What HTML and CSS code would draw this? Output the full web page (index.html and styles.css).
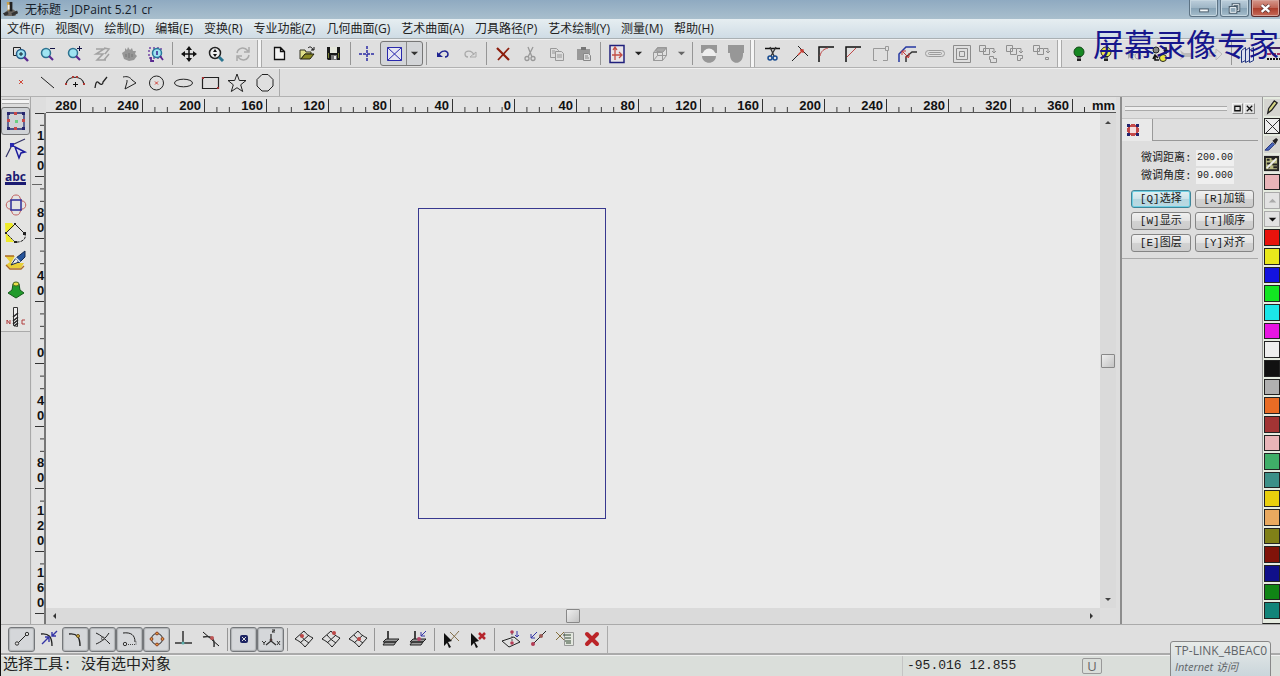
FILE: index.html
```html
<!DOCTYPE html>
<html lang="zh-CN">
<head>
<meta charset="utf-8">
<title>无标题 - JDPaint 5.21 cr</title>
<link rel="stylesheet" href="styles.css">
</head>
<body>
<div class="app">
  <header class="titlebar">
    <svg class="logo" viewBox="0 0 18 18"><path d="M3 12l4-3 5 0 4 3-2 4H4z" fill="#6b6660"/><path d="M5 1h4l1 9H6z" fill="#c9a04a"/><path d="M8 1h3l0 10H8z" fill="#222"/><path d="M1 13l5-2 1 3-4 2zM10 13l6-3 1 3-6 3z" fill="#333"/><path d="M6 4h2v5H6z" fill="#eee"/></svg>
    <h1 class="caption">无标题 - JDPaint 5.21 cr</h1>
    <div class="winbtns">
      <button class="winbtn" aria-label="最小化"><svg viewBox="0 0 28 15"><rect x="10" y="8" width="9" height="3" fill="#f4f8fa" stroke="#4c5e6c"/></svg></button>
      <button class="winbtn" aria-label="还原"><svg viewBox="0 0 28 15"><path d="M12.500 3.500h6v6h-6z" fill="none" stroke="#4c5e6c" stroke-width="3"/><path d="M12.500 3.500h6v6h-6z" fill="none" stroke="#eef4f7"/><path d="M9.500 6.500h6v5h-6z" fill="#8fa8b8" stroke="#4c5e6c" stroke-width="3"/><path d="M9.500 6.500h6v5h-6z" fill="#8fa8b8" stroke="#eef4f7"/></svg></button>
      <button class="winbtn close" aria-label="关闭"><svg viewBox="0 0 28 15"><path d="M10 4l8 7M18 4l-8 7" stroke="#5a3838" stroke-width="4"/><path d="M10 4l8 7M18 4l-8 7" stroke="#fff" stroke-width="2.400"/></svg></button>
    </div>
  </header>

  <nav class="menubar">
    <button>文件(F)</button><button>视图(V)</button><button>绘制(D)</button><button>编辑(E)</button><button>变换(R)</button><button>专业功能(Z)</button><button>几何曲面(G)</button><button>艺术曲面(A)</button><button>刀具路径(P)</button><button>艺术绘制(Y)</button><button>测量(M)</button><button>帮助(H)</button>
  </nav>

  <div class="toolbar">
    <button class="tool" aria-label="窗口缩放"><svg viewBox="0 0 20 20"><path d="M2.500 3.500h7v8h-7z" fill="none" stroke="#222"/><circle cx="10" cy="10" r="4.500" fill="#9fe4f2" stroke="#245c8a" stroke-width="1.500"/><path d="M10 8v4M8 10h4" stroke="#123"/><path d="M13 13l4 4" stroke="#5a2a90" stroke-width="2.400"/></svg></button>
    <button class="tool" aria-label="缩小"><svg viewBox="0 0 20 20"><circle cx="8" cy="9" r="4.500" fill="#9fe4f2" stroke="#2d7290" stroke-width="1.500"/><path d="M11 12l4 4" stroke="#5a2a90" stroke-width="2.200"/><path d="M12 4.500h5" stroke="#114"/></svg></button>
    <button class="tool" aria-label="放大"><svg viewBox="0 0 20 20"><circle cx="8" cy="9" r="4.500" fill="#9fe4f2" stroke="#2d7290" stroke-width="1.500"/><path d="M11 12l4 4" stroke="#5a2a90" stroke-width="2.200"/><path d="M12 4.500h5M14.500 2v5" stroke="#114"/></svg></button>
    <button class="tool" aria-label="上一视图"><svg viewBox="0 0 20 20" fill="none" stroke="#a2a2a2" stroke-width="1.500"><path d="M4 5h8l-8 5h7l-6 6h9M12 4l5 1-4 5M12 16l5-6"/></svg></button>
    <button class="tool" aria-label="平移"><svg viewBox="0 0 20 20"><path d="M3 9l3-2 0-3 2 2 1-3 2 3 2-2 1 3 3 0-1 3 2 2-3 4-5 1-5-2z" fill="#979797"/><path d="M7 10v3M10 9v5M13 10v3" stroke="#777"/></svg></button>
    <button class="tool" aria-label="全部显示"><svg viewBox="0 0 20 20"><path d="M3 4h12v10H3z" fill="none" stroke="#7347a5" stroke-dasharray="2 2" stroke-width="1.500"/><circle cx="11" cy="9" r="4.500" fill="#9fe4f2" stroke="#26789b" stroke-width="1.500"/><path d="M11 7v4" stroke="#39228a" stroke-width="1.500"/><path d="M14 12l3 4M5 13v4h3" fill="none" stroke="#5a2a90" stroke-width="1.800"/></svg></button>
    <i class="sep"></i>
    <button class="tool" aria-label="移动视图"><svg viewBox="0 0 20 20"><path d="M10 4v12M4 10h12" stroke="#111" stroke-width="1.500"/><path d="M10 2l3 4H7zM10 18l3-4H7zM2 10l4-3v6zM18 10l-4-3v6z" fill="#111"/></svg></button>
    <button class="tool" aria-label="动态缩放"><svg viewBox="0 0 20 20"><circle cx="9" cy="9" r="5.500" fill="#eee" stroke="#222" stroke-width="1.500"/><path d="M9 5l2 3H7zM9 13l2-3H7z" fill="#111"/><path d="M13 13l4 4" stroke="#2b7590" stroke-width="3"/></svg></button>
    <button class="tool" aria-label="刷新"><svg viewBox="0 0 20 20" fill="none" stroke="#aaa" stroke-width="1.500"><path d="M4 9c1-5 7-7 11-2M16 3v5h-5M16 11c-1 5-7 7-11 2M4 17v-5h5"/></svg></button>
    <i class="grip"></i>
    <button class="tool" aria-label="新建"><svg viewBox="0 0 20 20"><path d="M4.500 3.500h6l4 4v8h-10zM10.500 3.500v4h4" fill="#f4f4f4" stroke="#111" stroke-width="1.300"/></svg></button>
    <button class="tool" aria-label="打开"><svg viewBox="0 0 20 20"><path d="M3 6h5l1 2h5v2H8l-4 5H3z" fill="#dfe08a" stroke="#332"/><path d="M4 15l4-5h9l-4 5z" fill="#8b8b25" stroke="#221"/><path d="M11 4c2-2 4-1 5 2M17 3v3h-3" fill="none" stroke="#111"/></svg></button>
    <button class="tool" aria-label="保存"><svg viewBox="0 0 20 20"><path d="M3 3h13v13H4l-1-1z" fill="#191919"/><path d="M6 3h7v6H6z" fill="#e6e8dc"/><path d="M4 9h1v5H4zM14 9h1v5h-1z" fill="#788033"/><path d="M7 11h6v5H7z" fill="#777"/><path d="M10 12h2v3h-2z" fill="#eee"/></svg></button>
    <i class="sep"></i>
    <button class="tool" aria-label="十字光标"><svg viewBox="0 0 20 20"><path d="M2 10h16M10 2v16" stroke="#2b2ba5" stroke-width="1.500" stroke-dasharray="3 1"/></svg></button>
    <span class="split">
      <button class="split-main" aria-label="显示方式"><svg viewBox="0 0 20 20"><path d="M3.500 3.500h14v13h-14zM3.500 3.500l14 13M17.500 3.500l-14 13" fill="#e5e6f2" stroke="#2929ad"/></svg></button>
      <button class="split-drop" aria-label="更多"><svg viewBox="0 0 10 10"><path d="M1 3h8l-4 4z" fill="#333"/></svg></button>
    </span>
    <i class="sep"></i>
    <button class="tool" aria-label="撤销"><svg viewBox="0 0 20 20"><path d="M6 11c2-5 9-5 9-1 0 2-1 3-3 3" fill="none" stroke="#1d2290" stroke-width="1.500"/><path d="M4 8v5h6z" fill="#1d2290"/></svg></button>
    <button class="tool" aria-label="重做"><svg viewBox="0 0 20 20"><path d="M14 11c-2-5-9-5-9-1 0 2 1 3 3 3" fill="none" stroke="#aaa" stroke-width="1.300"/><path d="M16 8v5h-6z" fill="none" stroke="#aaa"/></svg></button>
    <i class="sep"></i>
    <button class="tool" aria-label="删除"><svg viewBox="0 0 20 20"><path d="M4 4l12 12" stroke="#8d1d0c" stroke-width="2.200"/><path d="M16 4L5 16" stroke="#8d1d0c" stroke-width="1.800"/></svg></button>
    <button class="tool" aria-label="剪切"><svg viewBox="0 0 20 20" fill="none" stroke="#999" stroke-width="1.300"><path d="M8 3l4 10M13 3L8 13"/><circle cx="7" cy="14.500" r="2"/><circle cx="13" cy="14.500" r="2"/></svg></button>
    <button class="tool" aria-label="复制"><svg viewBox="0 0 20 20" fill="#ddd" stroke="#999"><path d="M3.500 4.500h6l2 2v7h-8z"/><path d="M8.500 7.500h6l2 2v7h-8z"/><path d="M5 7h3M5 9h3M10 11h5M10 13h5"/></svg></button>
    <button class="tool" aria-label="粘贴"><svg viewBox="0 0 20 20"><path d="M3 5h13v11H3z" fill="#999"/><path d="M7 3h5v3H7z" fill="#777"/><path d="M9.500 9.500h5l2 2v5h-7z" fill="#ddd" stroke="#888"/><path d="M11 12h3M11 14h4" stroke="#888"/></svg></button>
    <i class="sep"></i>
    <button class="tool" aria-label="坐标系"><svg viewBox="0 0 20 20"><path d="M3 1.500h14v17H3z" fill="#e9e4e8" stroke="#20207c" stroke-width="1.500"/><path d="M8 16V4M5 11h10M12 8l3 3-3 3M6 6l2-3 2 3" fill="none" stroke="#c34e45" stroke-width="1.300"/></svg></button>
    <button class="drop" aria-label="坐标系选项"><svg viewBox="0 0 10 10"><path d="M1 3h8l-4 4z" fill="#222"/></svg></button>
    <button class="tool" aria-label="立体视图"><svg viewBox="0 0 20 20" fill="none" stroke="#999"><path d="M3.500 8.500h9v8h-9zM3.500 8.500l4-5h9l-4 5M16.500 3.500v8l-4 5M7.500 3.500v8h9M7.500 11.500l-4 5"/><path d="M5 7l3-3h8l-3 4z" fill="#aaa"/></svg></button>
    <button class="drop" aria-label="视图选项"><svg viewBox="0 0 10 10"><path d="M1 3h8l-4 4z" fill="#666"/></svg></button>
    <i class="sep"></i>
    <button class="tool" aria-label="着色"><svg viewBox="0 0 20 20"><path d="M2 1h16v8H2z" fill="#979797"/><circle cx="10" cy="11" r="6.500" fill="#eee"/><path d="M3 12h14c0 9-14 9-14 0z" fill="#979797"/></svg></button>
    <button class="tool" aria-label="实体"><svg viewBox="0 0 20 20"><path d="M2 1h16v8h-1c1 13-14 13-13 0H2z" fill="#979797"/></svg></button>
    <i class="grip"></i>
    <button class="tool" aria-label="修剪"><svg viewBox="0 0 20 20"><path d="M2 4.500h15" stroke="#111" stroke-width="1.500"/><path d="M7 3l4 9M13 3l-5 9" stroke="#333" stroke-width="1.300"/><g fill="none" stroke="#174b91" stroke-width="1.500"><circle cx="7" cy="14" r="2"/><circle cx="12" cy="14" r="2"/></g></svg></button>
    <button class="tool" aria-label="延伸"><svg viewBox="0 0 20 20"><path d="M8 2l10 10M2 17l6-6" stroke="#222"/><path d="M8 11l5-5M13 9V6h-3" fill="none" stroke="#c8392e" stroke-width="1.300"/></svg></button>
    <button class="tool" aria-label="倒圆"><svg viewBox="0 0 20 20"><path d="M2 18V3h15" fill="none" stroke="#111" stroke-width="1.500"/><path d="M3 12c1-5 4-7 8-8" fill="none" stroke="#c04848"/></svg></button>
    <button class="tool" aria-label="倒角"><svg viewBox="0 0 20 20"><path d="M2 18V3h15" fill="none" stroke="#111" stroke-width="1.500"/><path d="M3 13l9-9" stroke="#c04848"/></svg></button>
    <button class="tool" aria-label="连接"><svg viewBox="0 0 20 20" fill="none" stroke="#999"><path d="M6 16.500H2.500v-12h12M16.500 6v10.500H12"/><path d="M14.500 2.500h3v4h-3z"/></svg></button>
    <button class="tool" aria-label="偏移"><svg viewBox="0 0 20 20" fill="none"><path d="M1 18v-8l7-7h10" stroke="#2639a2" stroke-width="1.500"/><path d="M8 18v-5l6-5h5" stroke="#333" stroke-width="1.500"/><path d="M4 7l7 7M4 11V7h4M7 13h4V9" stroke="#c53838"/></svg></button>
    <button class="tool" aria-label="腰形"><svg viewBox="0 0 20 20" fill="none" stroke="#9b9b9b"><rect x=".5" y="6.500" width="19" height="6" rx="3"/><rect x="3.500" y="8.500" width="13" height="2" rx="1"/></svg></button>
    <button class="tool" aria-label="多重偏移"><svg viewBox="0 0 20 20" fill="none" stroke="#8c8c8c"><path d="M1.500 1.500h17v17h-17zM4.500 4.500h11v11h-11zM7.500 7.500h5v5h-5z"/></svg></button>
    <button class="tool" aria-label="并集"><svg viewBox="0 0 20 20" fill="none" stroke="#8f8f8f"><path d="M.5 1.500h6v6h-6zM4.500 4.500h6v6h-6zM11 4.500h4v4M13 7l2 2 2-2M10.500 12.500h4v2h3v4h-6v-3h-1z"/></svg></button>
    <button class="tool" aria-label="交集"><svg viewBox="0 0 20 20" fill="none" stroke="#8f8f8f"><path d="M.5 1.500h6v6h-6zM4.500 4.500h6v6h-6zM11 4.500h4v4M13 7l2 2 2-2M11.500 11.500h5v3h-2v2h-3z"/></svg></button>
    <button class="tool" aria-label="差集"><svg viewBox="0 0 20 20" fill="none" stroke="#8f8f8f"><path d="M.5 1.500h6v6h-6zM4.500 4.500h6v6h-6zM11 4.500h4v4M13 7l2 2 2-2M12.500 13.500h3v2h-3z"/></svg></button>
    <i class="grip"></i>
    <button class="tool" aria-label="显示"><svg viewBox="0 0 20 20"><circle cx="9" cy="8" r="5" fill="#168722" stroke="#134a18"/><path d="M7 12h4v5H7z" fill="#222"/><path d="M7 14h4" stroke="#bbb"/></svg></button>
    <button class="tool" aria-label="点亮"><svg viewBox="0 0 20 20"><circle cx="9" cy="8" r="5" fill="#ece94b" stroke="#222"/><path d="M7 12h4v5H7z" fill="#222"/><path d="M7 14h4" stroke="#bbb"/></svg></button>
    <button class="tool" aria-label="拾取"><svg viewBox="0 0 20 20"><path d="M4 5l7 6-3 1 2 4-2 0-2-3-2 2z" fill="#aaa"/><circle cx="14" cy="12" r="3" fill="none" stroke="#aaa"/></svg></button>
    <button class="tool" aria-label="切换显示"><svg viewBox="0 0 20 20"><circle cx="5" cy="6" r="3" fill="#888" stroke="#222"/><circle cx="12" cy="14" r="3.500" fill="#e8e63f" stroke="#222"/><path d="M2 15l2-4 3 3M4 12v4h4M11 4h4v4M13 6l2 3 2-3" fill="none" stroke="#111" stroke-width="1.600"/></svg></button>
    <button class="tool" aria-label="上一个"><svg viewBox="0 0 20 20"><path d="M2 6l4 3h7l3-2-2 4 2 4-4-2H6l-4 3 2-5z" fill="#bbb"/></svg></button>
    <button class="tool" aria-label="下一个"><svg viewBox="0 0 20 20"><path d="M4 9h7V5l6 5-6 6v-4H4z" fill="none" stroke="#bbb"/></svg></button>
    <i class="sep"></i>
    <button class="tool" aria-label="图层"><svg viewBox="0 0 20 20" fill="#dce1ef" stroke="#22347f"><path d="M3.500 6.500l4-3v13l-4 2zM7.500 6.500l4-3v13l-4 2zM11.500 6.500l4-3v13l-4 2z"/></svg></button>
    <button class="tool" aria-label="线型"><svg viewBox="0 0 20 20"><path d="M2 4h18" stroke="#402060" stroke-width="2"/><path d="M2 10h18" stroke="#a03060" stroke-width="2" stroke-dasharray="4 1"/><path d="M2 15h18" stroke="#111" stroke-width="2" stroke-dasharray="2 1"/></svg></button>
  </div>

  <div class="toolbar">
    <button class="tool" aria-label="点"><svg viewBox="0 0 20 20"><path d="M8 7l4 4M12 7l-4 4" stroke="#d04a3b"/></svg></button>
    <button class="tool" aria-label="直线"><svg viewBox="0 0 20 20"><path d="M3 4l13 11" stroke="#222"/></svg></button>
    <button class="tool" aria-label="圆弧"><svg viewBox="0 0 20 20"><path d="M1 11c2-9 16-9 18 0" fill="none" stroke="#222" stroke-width="1.200"/><path d="M10.500 9v5M8 11.500h5" stroke="#111"/><path d="M0 10h2v2H0zM18 10h2v2h-2zM7 3h2v2H7zM11 3h2v2h-2z" fill="#ad3934"/></svg></button>
    <button class="tool" aria-label="样条"><svg viewBox="0 0 20 20"><path d="M3 15c1-7 2-7 4-5s4 2 4-1l4-5" fill="none" stroke="#222" stroke-width="1.300"/></svg></button>
    <button class="tool" aria-label="多段线"><svg viewBox="0 0 20 20"><path d="M4 4c4-1 7 0 9 3l4 3-11 6 2-7V7" fill="none" stroke="#222"/></svg></button>
    <button class="tool" aria-label="圆"><svg viewBox="0 0 20 20"><circle cx="10.500" cy="10" r="7" fill="none" stroke="#222"/><path d="M9 8.500l3 3M12 8.500l-3 3" stroke="#d03b33"/></svg></button>
    <button class="tool" aria-label="椭圆"><svg viewBox="0 0 20 20"><ellipse cx="10.500" cy="10" rx="9" ry="3.800" fill="none" stroke="#222"/></svg></button>
    <button class="tool" aria-label="矩形"><svg viewBox="0 0 20 20"><path d="M2.500 4.500h16v11h-16z" fill="none" stroke="#222" stroke-width="1.200"/><path d="M2 4h2v2H2zM17 14h2v2h-2z" fill="#a33232"/></svg></button>
    <button class="tool" aria-label="星形"><svg viewBox="0 0 20 20"><path d="M10 1l2.300 6.500H19l-5.300 4.300 2 6.700L10 14.700 4.300 18.500l2-6.700L1 7.500h6.700z" fill="none" stroke="#222"/></svg></button>
    <button class="tool" aria-label="多边形"><svg viewBox="0 0 20 20"><path d="M8 1.500h6l5 5v6.500l-5 5H8L3 13V6.500z" fill="none" stroke="#222"/></svg></button>
    <i class="endline"></i>
  </div>

  <main class="body">
    <aside class="rail">
      <div class="rail-grip"></div>
      <button class="rail-btn on" aria-label="选择"><svg viewBox="0 0 24 24"><path d="M4 4h16v16H4z" fill="none" stroke="#222b70" stroke-width="1.300"/><path d="M3 3h3v3H3zM18 3h3v3h-3zM3 18h3v3H3zM18 18h3v3h-3z" fill="#26266f"/><path d="M10 3h3v3h-3zM10 18h3v3h-3zM3 10h3v3H3zM18 10h3v3h-3z" fill="#c84848"/><path d="M11 11h3v3h-3z" fill="#6bcf80"/></svg></button>
      <button class="rail-btn" aria-label="节点"><svg viewBox="0 0 24 24"><path d="M2 20L8 8l13-6" fill="none" stroke="#343468" stroke-width="1.200"/><path d="M6 6h4v4H6z" fill="#2828b0"/><path d="M11 10l10 5-4 1-2 5z" fill="#e0e0f0" stroke="#1c1c9c" stroke-width="1.500"/></svg></button>
      <button class="rail-btn texttool" aria-label="文字">abc</button>
      <button class="rail-btn" aria-label="变换"><svg viewBox="0 0 24 24" fill="none"><path d="M8 5c0-4 8-4 8 0l2 3c5 0 5 8 0 8l-2 3c0 4-8 4-8 0l-2-3c-5 0-5-8 0-8z" stroke="#c06060"/><path d="M7 7h10v10H7z" stroke="#2b2b99" stroke-width="1.500"/></svg></button>
      <button class="rail-btn" aria-label="区域"><svg viewBox="0 0 24 24"><path d="M1 2h7l2 3-8 7 8 9H2z" fill="#eeea28"/><path d="M2 12l9-9 9 9" fill="none" stroke="#222"/><path d="M20 12c4 5-2 10-9 9L2 12" fill="none" stroke="#222" stroke-dasharray="3 1"/><path d="M10 2h2v2h-2zM19 11h3v3h-3zM1 11h2v2H1zM10 20h3v2h-3z" fill="#222"/></svg></button>
      <button class="rail-btn" aria-label="雕刻"><svg viewBox="0 0 24 24"><path d="M1 7h10l-4 7h13l-3 5H6L2 16l4-3z" fill="#e9cf38"/><path d="M1 7h9M2 16l4 4h11l3-3" fill="none" stroke="#ab6a24" stroke-width="1.300"/><path d="M7 16l5-7 3 4z" fill="#eee" stroke="#15284d"/><path d="M12 9l9-7v6l-6 6z" fill="#27559b" stroke="#15284d"/><path d="M11 8l5 5" stroke="#dfe8f4" stroke-width="1.500"/></svg></button>
      <button class="rail-btn" aria-label="曲面"><svg viewBox="0 0 24 24"><path d="M9 7h6l1 6 4 3-8 5-8-5 4-3z" fill="#219b2b" stroke="#175a1c"/><ellipse cx="12" cy="7" rx="3" ry="2" fill="#e9e04a" stroke="#47661c"/></svg></button>
      <button class="rail-btn" aria-label="刀具路径"><svg viewBox="0 0 24 24"><path d="M9.500 2.500h4v19l-4-1z" fill="#eee" stroke="#333"/><path d="M9 12l5-4M9 16l5-4M9 19l5-4M10 21l4-3" stroke="#222" stroke-width="1.500"/><path d="M3 19v-4l3 4v-4M21 15h-3v4h3" fill="none" stroke="#b13c3c"/></svg></button>
      <div class="rail-end"></div>
    </aside>

    <section class="work">
      <div class="hruler">
        <span class="hc first"><b>280</b></span><span class="hc"><b>240</b></span><span class="hc"><b>200</b></span><span class="hc"><b>160</b></span><span class="hc"><b>120</b></span><span class="hc"><b>80</b></span><span class="hc"><b>40</b></span><span class="hc"><b>0</b></span><span class="hc"><b>40</b></span><span class="hc"><b>80</b></span><span class="hc"><b>120</b></span><span class="hc"><b>160</b></span><span class="hc"><b>200</b></span><span class="hc"><b>240</b></span><span class="hc"><b>280</b></span><span class="hc"><b>320</b></span><span class="hc"><b>360</b></span><span class="hc unit"><b>mm</b></span>
      </div>
      <div class="vruler">
        <span class="vc"><b>120</b></span><span class="vc marked"><b>80</b></span><span class="vc"><b>40</b></span><span class="vc"><b>0</b></span><span class="vc"><b>40</b></span><span class="vc"><b>80</b></span><span class="vc"><b>120</b></span><span class="vc"><b>160</b></span>
      </div>
      <div class="canvas"><div class="shape"></div></div>
      <div class="vscroll">
        <svg viewBox="0 0 10 10"><path d="M2 7h6L5 4z" fill="#444"/></svg>
        <i class="thumb"></i>
        <svg viewBox="0 0 10 10"><path d="M2 4h6L5 7z" fill="#444"/></svg>
      </div>
      <div class="hscroll">
        <svg viewBox="0 0 10 10"><path d="M6 2v6L3 5z" fill="#333"/></svg>
        <i class="thumb"></i>
        <svg viewBox="0 0 10 10"><path d="M4 2v6l3-3z" fill="#333"/></svg>
      </div>
    </section>

    <aside class="panel">
      <div class="panel-head"><i class="lines"></i>
        <button class="mini" aria-label="浮动"><svg viewBox="0 0 10 10"><path d="M2 2.500h6v5H2z" fill="none" stroke="#111" stroke-width="1.400"/></svg></button>
        <button class="mini" aria-label="关闭面板"><svg viewBox="0 0 10 10"><path d="M2 2l6 6M8 2L2 8" stroke="#111" stroke-width="1.400"/></svg></button>
      </div>
      <div class="tabs"><button class="tab" aria-label="选择"><svg viewBox="0 0 14 14"><path d="M3 3h8v8H3z" fill="#f4dede" stroke="#c44848" stroke-width="2"/><path d="M1 1h3v3H1zM10 1h3v3h-3zM1 10h3v3H1zM10 10h3v3h-3z" fill="#23236e"/><path d="M5 1h4v2H5zM5 11h4v2H5zM1 5h2v4H1zM11 5h2v4h-2z" fill="#c44848"/></svg></button></div>
      <form class="fields">
        <label for="dist">微调距离:</label><input id="dist" value="200.00">
        <label for="ang">微调角度:</label><input id="ang" value="90.000">
      </form>
      <div class="actions">
        <button class="act current">[Q]选择</button><button class="act">[R]加锁</button>
        <button class="act">[W]显示</button><button class="act">[T]顺序</button>
        <button class="act">[E]图层</button><button class="act">[Y]对齐</button>
      </div>
    </aside>

    <aside class="palette">
      <button class="pal" aria-label="笔"><svg viewBox="0 0 16 16"><path d="M4 14l1-5 6-8 3 2-6 8z" fill="#d7d785" stroke="#222" stroke-width="1.400"/></svg></button>
      <button class="pal boxed" aria-label="无填充"><svg viewBox="0 0 16 16"><path d="M1 1l14 14M15 1L1 15" stroke="#222"/></svg></button>
      <button class="pal" aria-label="吸管"><svg viewBox="0 0 16 16"><path d="M2 13l7-7 2 2-6 6H1z" fill="#4a69bd" stroke="#1a2b74"/><path d="M9 4l4-3 2 2-3 5z" fill="#222"/></svg></button>
      <button class="pal" aria-label="图案"><svg viewBox="0 0 16 16"><path d="M1 1h14v14H1z" fill="#b9bb83" stroke="#222" stroke-width="2"/><path d="M3 4h3M3 8h4M8 3h4M10 12h4M9 9h5M4 12h2" stroke="#222" stroke-width="2"/><path d="M3 13L13 3" stroke="#eee" stroke-width="2"/></svg></button>
      <button class="pal boxed pink" aria-label="当前颜色"></button>
      <button class="pal raised" aria-label="向上"><svg viewBox="0 0 16 16"><path d="M4 10h8L8 6z" fill="#aaa"/></svg></button>
      <button class="pal raised" aria-label="向下"><svg viewBox="0 0 16 16"><path d="M4 6h8l-4 4z" fill="#111"/></svg></button>
      <button class="pal boxed red" aria-label="红"></button><button class="pal boxed yellow" aria-label="黄"></button><button class="pal boxed blue" aria-label="蓝"></button><button class="pal boxed lime" aria-label="绿"></button><button class="pal boxed cyan" aria-label="青"></button><button class="pal boxed magenta" aria-label="品红"></button><button class="pal boxed white" aria-label="白"></button><button class="pal boxed black" aria-label="黑"></button><button class="pal boxed gray" aria-label="灰"></button><button class="pal boxed orange" aria-label="橙"></button><button class="pal boxed brown" aria-label="棕"></button><button class="pal boxed pink" aria-label="粉"></button><button class="pal boxed green" aria-label="海绿"></button><button class="pal boxed steel" aria-label="蓝绿"></button><button class="pal boxed gold" aria-label="金"></button><button class="pal boxed sand" aria-label="沙"></button><button class="pal boxed olive" aria-label="橄榄"></button><button class="pal boxed maroon" aria-label="暗红"></button><button class="pal boxed navy" aria-label="深蓝"></button><button class="pal boxed forest" aria-label="深绿"></button><button class="pal boxed teal" aria-label="水鸭"></button>
    </aside>
  </main>

  <div class="toolbar snapbar">
    <button class="tool on" aria-label="端点"><svg viewBox="0 0 20 20"><path d="M5 15L15 5" stroke="#222"/><g fill="#ddd" stroke="#333"><circle cx="5" cy="14.500" r="1.700"/><circle cx="15" cy="5" r="1.700"/></g></svg></button>
    <button class="tool" aria-label="最近点"><svg viewBox="0 0 20 20" fill="none"><path d="M2 5c8-1 11 3 11 12" stroke="#222" stroke-width="1.300"/><path d="M3 15l7-7M6 8h4v5M18 2l-5 5M17 7h-4V3" stroke="#3434a6" stroke-width="1.400"/></svg></button>
    <button class="tool on" aria-label="中点"><svg viewBox="0 0 20 20"><path d="M3 5c8-1 11 3 11 12" fill="none" stroke="#222" stroke-width="1.400"/><circle cx="12" cy="7" r="1.500" fill="#e2ba44" stroke="#5e491b"/></svg></button>
    <button class="tool on" aria-label="交点"><svg viewBox="0 0 20 20"><path d="M3 4c5 2 9 6 14 11M3 15c5-2 9-5 13-11" fill="none" stroke="#222"/><circle cx="10" cy="9.500" r="1.500" fill="none" stroke="#555"/></svg></button>
    <button class="tool on" aria-label="圆心"><svg viewBox="0 0 20 20"><path d="M3 4c8-1 12 2 12 9" fill="none" stroke="#222"/><circle cx="5" cy="15" r="1.700" fill="none" stroke="#333"/><path d="M8 15.500h8v-3" fill="none" stroke="#444" stroke-dasharray="1 1"/></svg></button>
    <button class="tool on" aria-label="象限点"><svg viewBox="0 0 20 20"><circle cx="10" cy="10" r="5.500" fill="none" stroke="#222"/><g fill="#e8a13d" stroke="#8d3d24"><circle cx="10" cy="4.500" r="1.400"/><circle cx="10" cy="15.500" r="1.400"/><circle cx="4.500" cy="10" r="1.400"/><circle cx="15.500" cy="10" r="1.400"/></g></svg></button>
    <button class="tool" aria-label="垂足"><svg viewBox="0 0 20 20"><path d="M1 14h17M9 2v12" stroke="#333" stroke-width="1.500"/><circle cx="9" cy="14" r="1.500" fill="#5bb0ad"/></svg></button>
    <button class="tool" aria-label="切点"><svg viewBox="0 0 20 20"><path d="M2 3l16 14" stroke="#111"/><path d="M2 8c8-2 12 1 11 10" fill="none" stroke="#333" stroke-width="1.500"/><circle cx="11" cy="9" r="2" fill="#bd5757"/></svg></button>
    <i class="sep"></i>
    <button class="tool on" aria-label="栅格"><svg viewBox="0 0 20 20"><rect x="6" y="6" width="8" height="8" rx="2" fill="#1d2463"/><path d="M8 8l4 4M12 8l-4 4" stroke="#ddd"/></svg></button>
    <button class="tool on" aria-label="坐标轴"><svg viewBox="0 0 20 20" fill="none" stroke="#333"><path d="M10 5v7l-5 4M10 12l5 4" stroke-width="1.300"/><path d="M11 1h3l-3 2h3M1 12l2 2 2-2M3 14v2M16 12l3 4M19 12l-3 4"/><circle cx="10" cy="11" r="1" fill="#c44"/></svg></button>
    <i class="sep"></i>
    <button class="tool" aria-label="曲面点"><svg viewBox="0 0 20 20"><path d="M1 10l9-8c2 3 5 5 9 7l-8 9C8 14 5 12 1 10zM6 6c3 4 6 6 9 8M6 14l9-8" fill="none" stroke="#222"/><circle cx="8" cy="7" r="2" fill="#bd4646"/></svg></button>
    <button class="tool" aria-label="曲面角点"><svg viewBox="0 0 20 20"><path d="M1 10l9-8c2 3 5 5 9 7l-8 9C8 14 5 12 1 10zM6 6c3 4 6 6 9 8M6 14l9-8" fill="none" stroke="#222"/><circle cx="13" cy="4" r="2" fill="#bd4646"/></svg></button>
    <button class="tool" aria-label="曲面中心"><svg viewBox="0 0 20 20"><path d="M1 10l9-8c2 3 5 5 9 7l-8 9C8 14 5 12 1 10zM6 6c3 4 6 6 9 8M6 14l9-8" fill="none" stroke="#222"/><circle cx="11" cy="10" r="2" fill="#bd4646"/></svg></button>
    <i class="sep"></i>
    <button class="tool" aria-label="工作面"><svg viewBox="0 0 20 20"><path d="M7 2v8" stroke="#111" stroke-width="1.500"/><path d="M5 10h13l-3 3H2zM4 13h11l-2 3H2z" fill="#999" stroke="#222"/></svg></button>
    <button class="tool" aria-label="投影面"><svg viewBox="0 0 20 20"><path d="M7 2v8" stroke="#111" stroke-width="1.500"/><path d="M5 10h13l-3 3H2zM4 13h11l-2 3H2z" fill="#999" stroke="#222"/><circle cx="11" cy="10" r="2" fill="#b34668"/><path d="M18 2l-5 5M17 7h-4V3" fill="none" stroke="#3434a6"/></svg></button>
    <i class="sep"></i>
    <button class="tool" aria-label="点选"><svg viewBox="0 0 20 20"><path d="M3 4l8 8-4 1 3 5-2 1-2-5-3 3z" fill="#111"/><path d="M9 3l9 9M18 2l-8 9" stroke="#85704b"/></svg></button>
    <button class="tool" aria-label="取消点选"><svg viewBox="0 0 20 20"><path d="M3 4l8 8-4 1 3 5-2 1-2-5-3 3z" fill="#111"/><path d="M11 4l6 6M17 4l-6 6" stroke="#b5252c" stroke-width="2.500"/></svg></button>
    <i class="sep"></i>
    <button class="tool" aria-label="投影点"><svg viewBox="0 0 20 20"><path d="M1 12l12-4 6 5-11 5z" fill="none" stroke="#222"/><path d="M11 4v10" stroke="#555" stroke-dasharray="2 1"/><circle cx="11" cy="3" r="1.800" fill="#b33c55"/><circle cx="11" cy="14" r="1.800" fill="#b33c55"/><path d="M16 2v6M14 6l2 2 2-2" fill="none" stroke="#3434a6"/></svg></button>
    <button class="tool" aria-label="相对点"><svg viewBox="0 0 20 20"><path d="M4 16L18 2" stroke="#222"/><circle cx="5" cy="15" r="2" fill="#b33c55"/><circle cx="13" cy="7" r="2" fill="#9b5a55"/><path d="M9 3L3 9M3 5v4h4" fill="none" stroke="#3434a6"/></svg></button>
    <button class="tool" aria-label="点列表"><svg viewBox="0 0 20 20"><path d="M1 3l8 8M9 3l-8 8" stroke="#85703b"/><path d="M9.500 3.500h9v13h-9z" fill="#e3e7df" stroke="#999"/><path d="M8 6h8M10 9h6M10 12h6M11 14h5" stroke="#344b34"/></svg></button>
    <button class="tool" aria-label="清除"><svg viewBox="0 0 20 20"><path d="M5 5l10 10M15 5L5 15" stroke="#bb2428" stroke-width="4" stroke-linecap="round"/></svg></button>
    <i class="endline"></i>
  </div>

  <footer class="status">
    <span class="hint">选择工具: 没有选中对象</span>
    <output class="coords">-95.016 12.855</output>
    <span class="ubox">U</span>
  </footer>

  <div class="watermark">屏幕录像专家</div>
  <div class="nettip" role="status"><span>TP-LINK_4BEAC0</span><em>Internet 访问</em></div>
</div>
</body>
</html>
```
FILE: styles.css
```css
* { box-sizing: border-box; }
body { margin: 0; font-family: "Open Sans", "Noto Sans CJK SC", sans-serif; font-size: 12px; color: #222; }
button { font: inherit; color: inherit; padding: 0; margin: 0; border: 0; background: none; }
svg { display: block; }

.app { position: relative; height: 100vh; display: flex; flex-direction: column; background: #dedede; border-left: 1px solid #111; overflow: hidden; }

.titlebar { flex: none; height: 19px; display: flex; align-items: center; gap: 6px; padding-left: 1px; background: linear-gradient(#8faac1, #a9bfcd); }
.logo { width: 17px; height: 17px; }
.caption { flex: 1; margin: 0; font-size: 12px; line-height: 18px; font-weight: 400; color: #16202a; }
.winbtns { display: flex; gap: 2px; align-self: flex-start; }
.winbtn { width: 29px; height: 17px; border: 1px solid #5d7384; border-top: 0; border-radius: 0 0 3px 3px; background: linear-gradient(#bccedb, #9db5c5 50%, #86a2b5 51%, #a5bdcb); box-shadow: inset 0 0 0 1px #c5d6e0; }
.winbtn svg { width: 27px; height: 15px; }
.close { border-color: #5b2b2b; background: linear-gradient(#d5988c, #bf6353 50%, #ab3d2b 51%, #c66a58); box-shadow: inset 0 0 0 1px #d7a298; }

.menubar { flex: none; height: 20px; display: flex; align-items: center; gap: 11px; padding-left: 6px; background: linear-gradient(#e6eef1, #cfdce5); border-bottom: 1px solid #a9b0b3; }
.menubar button { line-height: 18px; white-space: nowrap; }

.toolbar { flex: none; height: 29px; display: flex; align-items: center; padding-left: 6px; background: #dfdfdf; border-top: 1px solid #f0f0f0; border-bottom: 1px solid #b2b2b2; overflow: hidden; }
.tool { flex: none; width: 27px; height: 25px; display: grid; place-items: center; border-radius: 3px; }
.tool svg { width: 20px; height: 20px; }
.tool.on { border: 1px solid #74777a; background: #d5d7da; box-shadow: inset 0 0 1px 1px #b0b2b4; }
.drop { flex: none; width: 16px; display: grid; place-items: center; }
.drop svg, .split-drop svg { width: 9px; height: 9px; }
.sep { flex: none; width: 6px; height: 23px; background: linear-gradient(90deg, transparent 3px, #969696 3px, #969696 4px, transparent 4px); }
.grip { flex: none; width: 10px; height: 27px; background: linear-gradient(90deg, transparent 1px, #aaa 1px, #aaa 2px, #f5f5f5 2px, #f5f5f5 5px, #aaa 5px, #aaa 6px, transparent 6px); }
.endline { flex: none; width: 3px; height: 27px; border-right: 1px solid #aaa; }
.split { flex: none; width: 43px; height: 25px; display: flex; border: 1px solid #777; border-radius: 3px; background: #d3d5d8; }
.split-main { flex: 1; display: grid; place-items: center; border-right: 1px solid #888; }
.split-main svg { width: 20px; height: 20px; }
.split-drop { width: 15px; display: grid; place-items: center; }

.body { flex: 1; min-height: 0; display: flex; }
.rail { flex: none; width: 30px; display: flex; flex-direction: column; align-items: stretch; background: #dcdcdc; border-right: 1px solid #a9a9a9; }
.rail-grip { height: 7px; margin: 2px 1px 1px; border-top: 1px solid #aaa; background: linear-gradient(#f4f4f4 3px, #aaa 3px, #aaa 4px, transparent 4px); }
.rail-btn { flex: none; height: 28px; display: grid; place-items: center; background: #e4e4e2; }
.rail-btn svg { width: 24px; height: 24px; }
.rail-btn.on { border: 1px solid #777; border-radius: 3px; background: #d0d3d6; }
.texttool { font: bold 12px/14px "Open Sans", sans-serif; color: #1b1b72; text-decoration: underline; text-decoration-thickness: 3px; text-underline-offset: 1px; text-decoration-skip-ink: none; }
.rail-end { border-bottom: 1px solid #aaa; }

.work { flex: 1; min-width: 0; display: grid; grid-template: 16px minmax(0, 1fr) 16px / 15px minmax(0, 1fr) 16px; padding-right: 4px; border-right: 2px solid #8d8d8d; background: #dedede; }
.hruler { grid-column: 2 / 4; display: flex; overflow: hidden; padding-top: 2px; background: #e2e2e2; border-bottom: 1px solid #555; font: bold 13px/13px "Liberation Sans", sans-serif; color: #111; }
.hc { flex: none; width: 62px; display: flex; justify-content: flex-end; border-right: 1px solid #333; background: linear-gradient(90deg, transparent calc(100% - 1px), #333 0) 0 100% / 20% 5px repeat-x; background-origin: border-box; }
.hc b { margin-right: 2px; padding: 0 1px; background: #e2e2e2; }
.hc.first { width: 35px; background: none; }
.hc.unit { flex: 1; background-size: 12px 5px; border: 0; }
.hc.unit b { margin: 0; }
.vruler { grid-row: 2 / 4; display: flex; flex-direction: column; padding-bottom: 10px; background: #e2e2e2; border-right: 2px solid #777; border-left: 1px solid #ddd; font: bold 13px/15px "Liberation Sans", sans-serif; color: #111; }
.vc { flex: 1; display: flex; flex-direction: column; justify-content: flex-end; align-items: flex-end; border-bottom: 1px solid #333; background: linear-gradient(transparent calc(100% - 1px), #333 0) 100% 0 / 4px 20% repeat-y; background-origin: border-box; margin-left: 3px; }
.vc:first-child { border-top: 1px solid #333; }
.vc.marked::before { content: ""; width: 10px; margin: 0 2px auto 0; padding-top: 7px; border-bottom: 1px solid #666; }
.vc b { width: 7px; margin-bottom: 3px; word-break: break-all; background: #e2e2e2; }
.canvas { position: relative; background: #eaeaea; overflow: hidden; }
.shape { position: absolute; left: 372px; top: 95px; width: 188px; height: 311px; border: 1px solid #38388f; }
.vscroll, .hscroll { display: flex; align-items: center; justify-content: space-between; background: #dadada; }
.vscroll { flex-direction: column; padding: 4px 0; }
.hscroll { grid-column: 2 / 3; padding: 0 4px; }
.vscroll svg, .hscroll svg { width: 10px; height: 10px; }
.thumb { width: 14px; height: 14px; border: 1px solid #888; border-radius: 1px; background: linear-gradient(135deg, #eee, #c3c3c3); }

.panel { flex: none; width: 140px; padding-right: 4px; background: #dedede; }
.panel-head { display: flex; align-items: center; gap: 1px; height: 14px; margin: 4px 3px 3px 3px; }
.lines { flex: 1; height: 5px; margin-right: 4px; border: solid #aaa; border-width: 1px 0; background: #eee; }
.mini { width: 11px; height: 11px; border: 1px solid #aaa; border-color: #f4f4f4 #888 #888 #f4f4f4; }
.mini svg { width: 9px; height: 9px; }
.tabs { height: 23px; border-bottom: 1px solid #999; border-top: 1px solid #c5c5c5; }
.tab { width: 31px; height: 22px; padding-left: 4px; background: #e9e9e9; border-right: 1px solid #999; }
.tab svg { width: 14px; height: 14px; }
.fields { display: grid; grid-template-columns: 50px 38px; gap: 2px 5px; padding: 9px 0 0 19px; align-items: center; }
.fields label { font: 12px/16px "Liberation Sans Narrow", "Liberation Mono", "Noto Sans CJK SC", sans-serif; font-size: 11px; color: #1a1a1a; white-space: nowrap; }
.fields input { width: 38px; height: 16px; padding: 0 1px; border: 0; background: #efefef; color: #1a1a1a; font: 10px/16px "Liberation Mono", monospace; }
.actions { display: grid; grid-template-columns: 1fr 1fr; gap: 4px; padding: 6px 4px 6px 9px; border-bottom: 1px solid #aaa; }
.act { height: 18px; border: 1px solid #858585; border-radius: 3px; background: linear-gradient(#f0f0f0, #e2e2e2 50%, #d2d2d2 51%, #cccccc); font: 10px/16px "Liberation Mono", "Noto Sans CJK SC", monospace; font-size: 11px; color: #1a1a1a; }
.act.current { border-color: #3f8598; background: linear-gradient(#e3f0f3, #cce3ea 50%, #b4d6e0 51%, #bcd9e1); box-shadow: inset 0 0 0 1px #6fcfe3; }

.palette { flex: none; width: 18px; display: grid; grid-auto-rows: minmax(0, 1fr); padding: 1px 0 3px 1px; background: #e5ebe0; border-left: 1px solid #999; border-bottom: 1px solid #222; }
.pal { min-height: 0; width: 100%; margin: 1px 0; overflow: hidden; background: #d5d5d0; }
.pal svg { width: 15px; height: 15px; }
.boxed { border: 1px solid #222; background: #eee; }
.raised { border: 1px solid #aaa; background: #e2e2e2; }
.pink { background: #e9b4b8; } .red { background: #e8120c; } .yellow { background: #e8e81c; } .blue { background: #1313df; } .lime { background: #12e522; } .cyan { background: #1be5e8; } .magenta { background: #e815e2; } .white { background: #eee; } .black { background: #111; } .gray { background: #b0b0b0; } .orange { background: #e96c25; } .brown { background: #a23434; } .green { background: #3fae68; } .steel { background: #3c9088; } .gold { background: #e9cf0d; } .sand { background: #e9a95f; } .olive { background: #808018; } .maroon { background: #801309; } .navy { background: #10108a; } .forest { background: #108515; } .teal { background: #128479; }

.snapbar { height: 31px; padding-left: 7px; border-top: 1px solid #aaa; border-bottom: 2px solid #aaa; }
.status { flex: none; height: 21px; display: flex; align-items: center; padding-left: 2px; background: #dadeda; border-top: 1px solid #f1f1f1; white-space: pre; }
.hint { flex: 1; font: 15px/20px "Liberation Mono", "Noto Sans CJK SC", monospace; }
.coords { width: 180px; padding-left: 4px; border-left: 1px solid #c4c4c4; font: 13px/20px "Liberation Mono", monospace; }
.ubox { width: 20px; height: 16px; margin-right: 178px; border: 1px solid #999; border-radius: 2px; text-align: center; line-height: 14px; color: #666; font-size: 13px; }

.watermark { position: absolute; top: 24px; right: 1px; font: 400 31px/38px "Noto Sans CJK SC", sans-serif; color: #16168c; pointer-events: none; }
.nettip { position: absolute; right: 9px; bottom: -3px; width: 101px; height: 38px; padding: 1px 4px; display: flex; flex-direction: column; border: 1px solid #888; border-radius: 3px; background: linear-gradient(#e8ebe9, #c8d4da); color: #606468; line-height: 16px; white-space: nowrap; }
.nettip em { font-size: 11px; }
```
